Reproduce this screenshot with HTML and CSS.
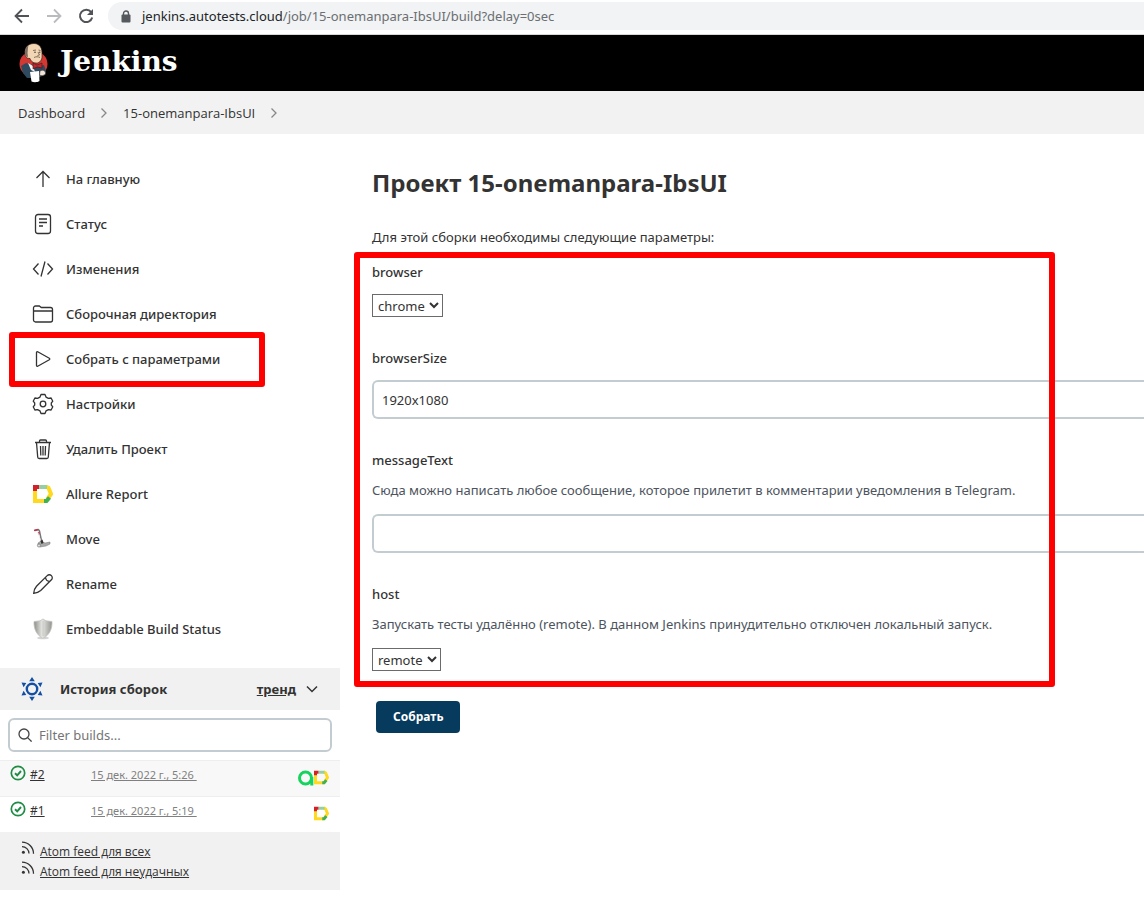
FILE: index.html
```html
<!DOCTYPE html>
<html lang="ru">
<head>
<meta charset="utf-8">
<title>Проект 15-onemanpara-IbsUI</title>
<link rel="stylesheet" href="styles.css">
</head>
<body>
<svg class="defs" width="0" height="0" aria-hidden="true">
  <symbol id="allure" viewBox="0 0 20 20">
    <g fill="none" stroke-width="4">
      <path d="M2 5v12h11" stroke="#ffd91f"/>
      <path d="M13 2.500l2.500 1.500L18 10l-3.500 5" stroke="#ffd91f"/>
      <path d="M6 3h8" stroke="#97cfa4"/>
      <path d="M16.500 13.500L13.500 17H11" stroke="#43b04f"/>
    </g>
    <path d="M0 1h6v4H4v2H0z" fill="#d5202a"/>
  </symbol>
  <symbol id="ok" viewBox="0 0 16 16">
    <circle cx="8" cy="8" r="6.700" fill="none" stroke="#1e8c45" stroke-width="1.700"/>
    <path d="M5 8.300l2.200 2L11 6" fill="none" stroke="#1e8c45" stroke-width="1.900"/>
  </symbol>
  <symbol id="rss" viewBox="0 0 14 14">
    <circle cx="2.400" cy="11.200" r="1.500" fill="#333"/>
    <path d="M1 5.600a7 7 0 0 1 7 7M1 1.200a11.500 11.500 0 0 1 11.500 11.500" fill="none" stroke="#333" stroke-width="1.300"/>
  </symbol>
  <symbol id="crumb" viewBox="0 0 8 12">
    <path d="M1.500 1.500L6 6l-4.500 4.500" fill="none" stroke="#888" stroke-width="1.300"/>
  </symbol>
</svg>

<div class="browser">
  <button class="browser-btn" aria-label="Назад"><svg width="16" height="16" viewBox="0 0 16 16" fill="none" stroke="#505357" stroke-width="1.800"><path d="M15 8H2M8 1.500L1.500 8 8 14.500"/></svg></button>
  <button class="browser-btn" aria-label="Вперёд"><svg width="16" height="16" viewBox="0 0 16 16" fill="none" stroke="#b9bbbe" stroke-width="1.800"><path d="M1 8h13M8 1.500L14.500 8 8 14.500"/></svg></button>
  <button class="browser-btn" aria-label="Обновить"><svg width="16" height="16" viewBox="0 0 16 16"><path d="M13.200 4.200A6.200 6.200 0 1 0 14.200 9.500" fill="none" stroke="#505357" stroke-width="2"/><path d="M15 1v6H9z" fill="#505357"/></svg></button>
  <div class="address">
    <svg width="10" height="13" viewBox="0 0 10 13"><path d="M2.500 5V3.500a2.500 2.500 0 0 1 5 0V5" fill="none" stroke="#55585c" stroke-width="1.400"/><rect x="0.500" y="4.500" width="9" height="8" rx="1" fill="#55585c"/></svg>
    <span class="url"><span class="host">jenkins.autotests.cloud</span>/job/15-onemanpara-IbsUI/build?delay=0sec</span>
  </div>
</div>

<header class="header">
  <a class="brand" href="#">
    <svg width="30" height="42" viewBox="0 0 30 42">
      <ellipse cx="14.500" cy="22" rx="14" ry="13" fill="#d33833"/>
      <path d="M2 24l5-3 7 2 6 1 5-1 2 6-1 4-8 3H8l-4-5z" fill="#2f4a5f"/>
      <path d="M9 21l5 3 2 6-4-2z" fill="#f4f4f4"/>
      <path d="M6 12C5 6 9 1.500 15 1.500c6 0 8.500 5 8 11 .5 4-1 7.500-4.500 8.500-4 .5-6.500-1.500-7.500-4.500-3 0-4.500-1-5-4.500z" fill="#f2d5b2" stroke="#2a1e1a" stroke-width=".7"/>
      <path d="M6 12c-.5-4 1-7 3.500-8.500C8.500 7 9 9 8.500 11l.5 4-2-.5z" fill="#7b6b60"/>
      <path d="M14 8.500l3-.5M19.500 8l2 .5M19 10l1.500 3-2 .5M15 15.500c2-1 4-1 6 0" fill="none" stroke="#6b5346" stroke-width=".8"/>
      <circle cx="16" cy="10.200" r=".7" fill="#221"/><circle cx="20.800" cy="10.200" r=".6" fill="#221"/>
      <path d="M14 21l4 2 5-2v5l-5-1-4 2z" fill="#c4262b" stroke="#401519" stroke-width=".6"/>
      <path d="M11 30l9-1 .5 10c-2 1.500-6 1.500-8 .5z" fill="#fff"/>
      <path d="M21 29c3-2 6 0 5.500 3-2 2-4 2-6 1z" fill="#f1e4d6" stroke="#44352f" stroke-width=".6"/>
    </svg>
    <span class="brand-name">Jenkins</span>
  </a>
</header>

<nav class="crumbs">
  <a href="#">Dashboard</a>
  <svg width="8" height="12"><use href="#crumb"/></svg>
  <a href="#">15-onemanpara-IbsUI</a>
  <svg width="8" height="12"><use href="#crumb"/></svg>
</nav>

<div class="page">
  <aside class="side">
    <nav class="tasks">
      <a class="task" href="#"><svg viewBox="0 0 22 22"><path d="M11 19V3.500M4.500 10L11 3.500l6.500 6.500"/></svg>На главную</a>
      <a class="task" href="#"><svg viewBox="0 0 22 22"><rect x="3.500" y="1.500" width="15" height="19" rx="2.500"/><path d="M7 6h8M7 9.500h8M7 13h4"/></svg>Статус</a>
      <a class="task" href="#"><svg viewBox="0 0 22 22"><path d="M6.500 5.500L1.500 11l5 5.500M15.500 5.500l5 5.500-5 5.500M13 3.500L9 18.500"/></svg>Изменения</a>
      <a class="task" href="#"><svg viewBox="0 0 22 22"><path d="M1.500 7.500V5A2 2 0 0 1 3.500 3h3.800l2 1.500h9.200a2 2 0 0 1 2 2v10.500a2 2 0 0 1-2 2h-15a2 2 0 0 1-2-2zM1.500 8h19"/></svg>Сборочная директория</a>
      <a class="task" href="#"><svg viewBox="0 0 22 22"><path d="M4.500 4.500v13c0 .8.600 1 1.200.7l11.600-6.500c.6-.4.600-1 0-1.400L5.700 3.800c-.6-.3-1.200-.1-1.200.7z"/></svg>Собрать с параметрами<span class="mark mark-task"></span></a>
      <a class="task" href="#"><svg viewBox="0 0 22 22"><circle cx="11" cy="11" r="2.800"/><path d="M9 1.500h4l1 2.600 2.400 1.300 2.700-.4 1.700 3.200-1.500 1.800v2l1.500 1.800-1.700 3.200-2.700-.4-2.400 1.300-1 2.600H9l-1-2.600-2.400-1.300-2.700.4-1.700-3.200L2.700 12v-2L1.200 8.200 2.900 5l2.700.4L8 4.100z" stroke-linejoin="round"/></svg>Настройки</a>
      <a class="task" href="#"><svg viewBox="0 0 22 22"><path d="M3 4.500h16M7.500 4.500V3a1 1 0 0 1 1-1h5a1 1 0 0 1 1 1v1.500M4.500 4.500L5.700 19a1.500 1.500 0 0 0 1.500 1.500h7.600a1.500 1.500 0 0 0 1.500-1.500l1.200-14.500M8.500 8l.3 9.500M11 8v9.500M13.500 8l-.3 9.500"/></svg>Удалить Проект</a>
      <a class="task" href="#"><svg class="plain" viewBox="0 0 22 22"><use href="#allure" x="1" y="1" width="20" height="20"/></svg>Allure Report</a>
      <a class="task" href="#"><svg class="plain" viewBox="0 0 22 22"><path d="M3 2.500l3.500-1 1 1.500 2 10" fill="none" stroke="#777" stroke-width="1.500"/><path d="M2 2.500l4-1M6.500 4l.5 2.500" stroke="#c23550" stroke-width="1.500"/><path d="M6 4.500l2.500 8" stroke="#eee" stroke-width=".8"/><path d="M6 15l3-2 4 2 5-1v2l-4 2-6 1-2-2z" fill="#a9aaa7" stroke="#777" stroke-width=".5"/><path d="M8.500 13l2-1.500 1 3.500-2 1z" fill="#333"/><circle cx="7" cy="17.500" r="1.600" fill="#ddd" stroke="#666" stroke-width=".6"/></svg>Move</a>
      <a class="task" href="#"><svg viewBox="0 0 22 22"><path d="M1.700 20.300c.2-3 1-5 2.800-7L15.200 2.600a2.900 2.900 0 0 1 4.200 4.200L8.700 17.500c-2 1.800-4 2.600-7 2.800zM13.500 4.500c.3 2 1.800 3.700 4 4"/></svg>Rename</a>
      <a class="task" href="#"><svg class="plain" viewBox="0 0 22 22"><defs><linearGradient id="steel"><stop offset="0" stop-color="#8d8e8a"/><stop offset=".45" stop-color="#e6e6e3"/><stop offset="1" stop-color="#92938f"/></linearGradient></defs><ellipse cx="11" cy="20" rx="6" ry="1.300" fill="#d5d5d5"/><path d="M11 1l3 1.800 6 .7c.3 7-2 13-9 17C4 16.500 1.700 10.500 2 3.500l6-.7z" fill="url(#steel)" stroke="#c4c4c0" stroke-width=".8"/><path d="M11 3v15" stroke="#bbb" stroke-width=".6"/></svg>Embeddable Build Status</a>
    </nav>

    <section class="history">
      <div class="history-head">
        <svg width="22" height="24" viewBox="0 0 22 24" fill="#124fa5"><circle cx="11" cy="12" r="5.200" fill="none" stroke="#124fa5" stroke-width="2.400"/><path d="M11 0l2.800 4.200H8.200zM11 24l2.800-4.200H8.200zM.5 5.500l4.800.5-2.700 4.200zM21.500 5.500l-4.800.5 2.700 4.200zM.5 18.500l4.800-.5-2.700-4.200zM21.500 18.500l-4.800-.5 2.700-4.200z"/></svg>
        <h2>История сборок</h2>
        <a href="#">тренд</a>
        <svg width="12" height="8" viewBox="0 0 12 8"><path d="M1 1.500l5 5 5-5" fill="none" stroke="#333" stroke-width="1.500"/></svg>
      </div>
      <div class="filter">
        <svg width="14" height="14" viewBox="0 0 14 14" fill="none" stroke="#444" stroke-width="1.300"><circle cx="6" cy="6" r="5"/><path d="M9.600 9.600l4 4"/></svg>
        <input type="text" placeholder="Filter builds..." aria-label="Filter builds">
      </div>
      <div class="build">
        <svg width="16" height="16"><use href="#ok"/></svg>
        <a class="num" href="#">#2</a>
        <a class="date" href="#">15 дек. 2022 г., 5:26&nbsp;</a>
        <span class="badges">
          <svg width="16" height="16" viewBox="0 0 16 16" fill="none" stroke="#15d35c" stroke-width="3"><circle cx="7.500" cy="8" r="6"/><path d="M13.800 7v8.500"/></svg>
          <svg width="15" height="15"><use href="#allure"/></svg>
        </span>
      </div>
      <div class="build">
        <svg width="16" height="16"><use href="#ok"/></svg>
        <a class="num" href="#">#1</a>
        <a class="date" href="#">15 дек. 2022 г., 5:19&nbsp;</a>
        <span class="badges"><svg width="15" height="15"><use href="#allure"/></svg></span>
      </div>
      <div class="feeds">
        <a href="#"><svg width="14" height="14"><use href="#rss"/></svg><span>Atom feed для всех</span></a>
        <a href="#"><svg width="14" height="14"><use href="#rss"/></svg><span>Atom feed для неудачных</span></a>
      </div>
    </section>
  </aside>

  <main class="main">
    <h1>Проект 15-onemanpara-IbsUI</h1>
    <p class="intro">Для этой сборки необходимы следующие параметры:</p>
    <form>
      <div class="params">
        <div class="field">
          <label for="browser">browser</label>
          <select id="browser"><option>chrome</option><option>opera</option></select>
        </div>
        <div class="field">
          <label for="size">browserSize</label>
          <input id="size" type="text" value="1920x1080">
        </div>
        <div class="field">
          <label for="message">messageText</label>
          <p class="hint">Сюда можно написать любое сообщение, которое прилетит в комментарии уведомления в Telegram.</p>
          <input id="message" type="text">
        </div>
        <div class="field">
          <label for="host">host</label>
          <p class="hint">Запускать тесты удалённо (remote). В данном Jenkins принудительно отключен локальный запуск.</p>
          <select id="host"><option>remote</option></select>
        </div>
        <span class="mark mark-params"></span>
      </div>
      <button class="submit" type="button">Собрать</button>
    </form>
  </main>
</div>
</body>
</html>
```
FILE: styles.css
```css
* { box-sizing: border-box; }

body {
  margin: 0;
  background: #fff;
  color: #333;
  font: 13px/20px "Noto Sans", "Open Sans", sans-serif;
}

a { color: inherit; }
svg { flex: none; display: block; }
.defs { position: absolute; }

/* Browser bar */
.browser {
  display: flex;
  align-items: center;
  gap: 16px;
  height: 35px;
  padding: 0 0 2px 14px;
  border-bottom: 1px solid #d5d7da;
  overflow: hidden;
}
.browser-btn {
  padding: 0;
  border: 0;
  background: none;
}
.address {
  flex: 1;
  display: flex;
  align-items: center;
  gap: 11px;
  height: 28px;
  padding-left: 13px;
  border-radius: 14px 0 0 14px;
  background: #f1f3f4;
  color: #6b6e72;
}
.browser-btn + .address { margin-left: -2px; }
.host { color: #222427; }

/* Header */
.header {
  display: flex;
  align-items: center;
  height: 56px;
  padding-left: 19px;
  background: #000;
}
.brand {
  display: flex;
  align-items: center;
  gap: 11px;
  color: #fff;
  text-decoration: none;
}
.brand-name {
  padding-bottom: 2px;
  font: bold 28px/32px "DejaVu Serif", serif;
}

.crumbs {
  display: flex;
  align-items: center;
  gap: 15px;
  height: 43px;
  padding-left: 18px;
  background: #f2f2f2;
  font-family: "Open Sans", "Noto Sans", sans-serif;
  font-weight: 500;
}
.crumbs a { text-decoration: none; }

/* Side panel */
.page { display: flex; }
.side {
  flex: none;
  width: 340px;
}
.tasks { padding: 22px 0 17px; }
.task {
  position: relative;
  display: flex;
  align-items: center;
  gap: 12px;
  height: 45px;
  padding-left: 32px;
  font-weight: 500;
  text-decoration: none;
}
.task svg {
  width: 22px;
  height: 22px;
  fill: none;
  stroke: #333;
  stroke-width: 1.3;
}
.task svg.plain { stroke: none; }

.history-head {
  display: flex;
  align-items: center;
  height: 42px;
  padding: 0 22px 0 21px;
  background: #f1f1f1;
  font-weight: 700;
}
.history-head h2 {
  flex: 1;
  margin: 0 0 0 17px;
  font: inherit;
}
.history-head a { margin-right: 10px; }

.filter {
  display: flex;
  align-items: center;
  gap: 7px;
  height: 34px;
  margin: 8px;
  padding: 0 8px;
  border: 2px solid #c3ccd1;
  border-radius: 6px;
}
.filter input {
  flex: 1;
  min-width: 0;
  padding: 0;
  border: 0;
  outline: 0;
  background: none;
  font: inherit;
}
.filter input::placeholder { color: #757575; }

.build {
  display: flex;
  align-items: flex-start;
  height: 36px;
  padding: 4px 11px 0 10px;
  border-top: 1px solid #eee;
  font-size: 11px;
}
.build:nth-of-type(odd) { background: #f8f8f8; }
.build:nth-of-type(even) { background: #fff; }
.num {
  width: 61px;
  margin-left: 4px;
  font-size: 12px;
}
.date {
  flex: 1;
  color: #808080;
}
.badges {
  display: flex;
  padding-top: 5px;
}

.feeds {
  padding: 9px 21px;
  background: #f1f1f1;
  font: 12px/22px "Open Sans", "Noto Sans", sans-serif;
}
.feeds a {
  display: flex;
  gap: 5px;
  height: 20px;
}

/* Build form */
.main {
  flex: 1;
  min-width: 0;
  padding: 33px 0 0 32px;
}
h1 {
  margin: 0;
  font: 700 24px/32px "Noto Sans", "Open Sans", sans-serif;
}
.intro { margin: 28px 0 15px; }
.params {
  position: relative;
  display: grid;
  gap: 31px;
}
.field label {
  display: block;
  margin-bottom: 12px;
  font-weight: 500;
}
.hint {
  margin: -2px 0 14px;
  color: #4d545d;
}
.field input {
  display: block;
  width: 100%;
  height: 39px;
  padding: 0 8px;
  border: 2px solid #c3ccd1;
  border-right: 0;
  border-radius: 6px 0 0 6px;
  color: #333;
  font: inherit;
}
.field select {
  display: block;
  height: 23px;
  padding: 0 1px;
  border: 1px solid #6b6b6b;
  border-radius: 0;
  background: #fff;
  color: #333;
  font: inherit;
}
.submit {
  height: 32px;
  margin: 30px 4px;
  padding: 0 17px;
  border: 0;
  border-radius: 4px;
  background: #063b5e;
  color: #fff;
  font: 700 12px/20px "Noto Sans", "Open Sans", sans-serif;
}

/* Red highlight frames drawn over the page */
.mark {
  position: absolute;
  border: 6px solid #f00;
  border-radius: 3px;
  pointer-events: none;
}
.mark-task { inset: -4px 75px -6px 9px; }
.mark-params { inset: -10px 89px -16px -18px; }
```
